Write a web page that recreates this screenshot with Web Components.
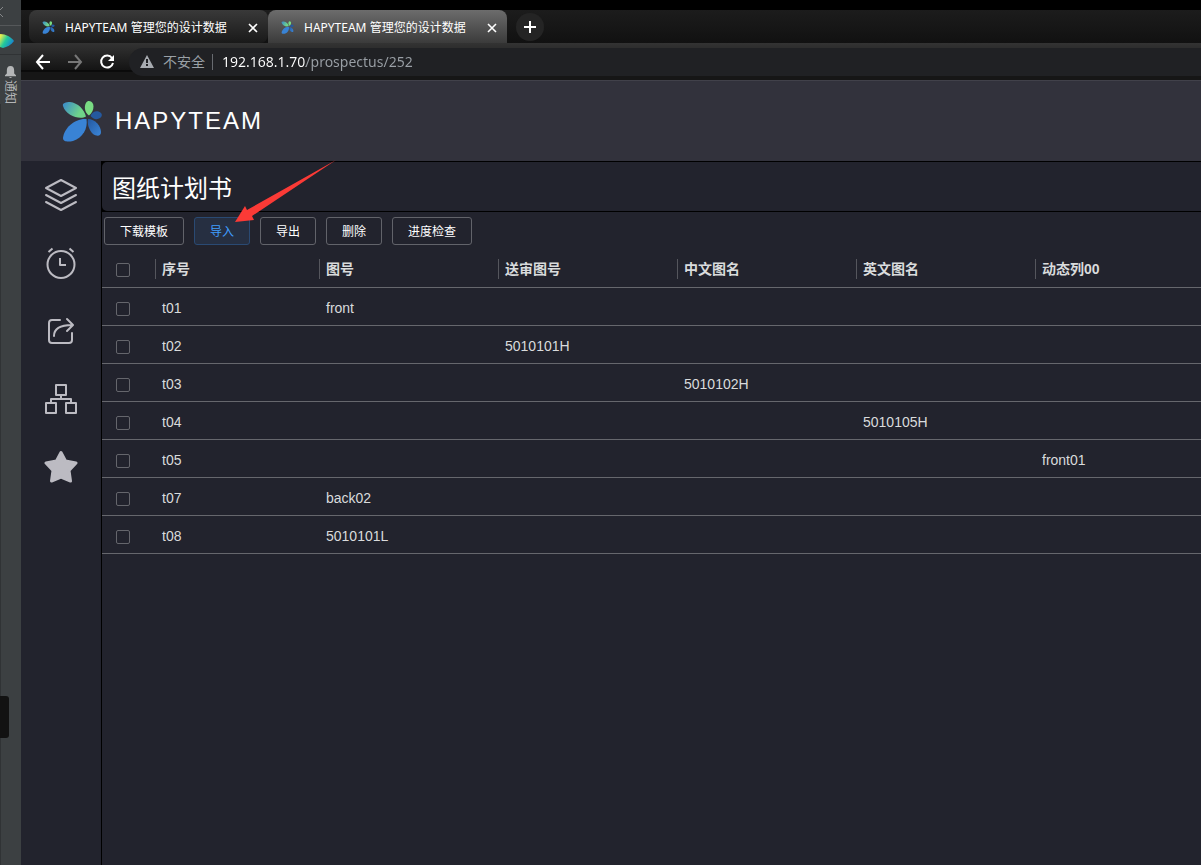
<!DOCTYPE html>
<html lang="zh-CN">
<head>
<meta charset="utf-8">
<title>HAPYTEAM 管理您的设计数据</title>
<style>
html,body{margin:0;height:100%}
body{background:#22232d;color:#d9dbdc;font-family:"Liberation Sans","Noto Sans CJK SC",sans-serif;font-size:14px;overflow:hidden}
</style>
</head>
<body>
<hapy-desktop></hapy-desktop>
<script>
const define = (name, html, setup) => {
  const t = document.createElement('template');
  t.innerHTML = html;
  customElements.define(name, class extends HTMLElement {
    constructor() {
      super();
      this.attachShadow({mode: 'open'}).append(t.content.cloneNode(true));
    }
    connectedCallback() { if (setup) setup(this, this.shadowRoot); }
  });
};

define('hapy-logo', `
<style>:host{display:block;flex:none;width:40px;height:42px}svg{display:block;width:100%;height:100%}</style>
<svg viewBox="0 0 40 42" aria-hidden="true">
  <defs>
    <linearGradient id="a" x1="0" y1="0.3" x2="1" y2="0.7"><stop offset="0" stop-color="#3f91c5"/><stop offset=".75" stop-color="#6fd48a"/></linearGradient>
    <linearGradient id="b" x1="0" y1="0" x2="1" y2="1"><stop offset="0" stop-color="#2458a0"/><stop offset="1" stop-color="#3b86d8"/></linearGradient>
  </defs>
  <path fill="url(#a)" d="M24 16.500C18 20 4 16 1 6C0 3 4 2 8 2C16 3 22 9 24 16.500Z"/>
  <path fill="#79db83" d="M27 15.500C21 12 22 1 27 1C33 1 33 11 27 15.500Z"/>
  <path fill="#25599f" d="M28.500 16C30 11 36 10 39 13C41 15 39 18 37 18.500C34 20 31 19 28.500 16Z"/>
  <path fill="url(#b)" d="M26 19C33 19 39 26 39 32C39 37 34 36 31 34C27 30 25 24 26 19Z"/>
  <path fill="#3983d5" d="M24.500 19C26 28 21 38 11 41C6 42 1 42 1 38C2 28 13 18 24.500 19Z"/>
</svg>`);

define('ide-strip', `
<style>
:host{display:flex;flex-direction:column;align-items:center;width:21px;flex:none;background:#3c4042;box-sizing:border-box;position:relative;overflow:hidden}
.back{height:26px;width:21px;border-bottom:1px solid #55585a;box-sizing:border-box}
.run{height:28px;width:21px;border-bottom:1px solid #303335}
svg{display:block}
.bell{margin-top:11px}
.notice{writing-mode:vertical-rl;text-orientation:sideways;font:12px/14px "Noto Sans CJK SC",sans-serif;color:#b4b6b7;margin-top:2px}
.edge{flex:1;width:20px;border-left:1px solid #303335;align-self:flex-start}
.handle{position:absolute;left:0;bottom:127px;width:9px;height:42px;background:#121212;border-radius:0 3px 3px 0}
</style>
<div class="back"><svg width="21" height="25" fill="none" stroke="#85888a"><path d="M3 7L-2 12L3 17"/></svg></div>
<div class="run"><svg width="21" height="28"><defs><linearGradient id="g" x1="0" y1="0" x2="1" y2=".6"><stop offset=".1" stop-color="#e5ee50"/><stop offset=".5" stop-color="#22c99b"/><stop offset="1" stop-color="#187ed5"/></linearGradient></defs><path fill="url(#g)" d="M0 8C6 8 11 11 14 15C11 19 7 21 3 22L0 21Z"/></svg></div>
<svg class="bell" width="11" height="12" viewBox="0 0 12 13" fill="#b4b6b7"><path d="M6 0C3 0 2 2 2 5V8L0 10V11H12V10L10 8V5C10 2 9 0 6 0ZM4 12H8L6 13Z"/></svg>
<div class="notice">通知</div><div class="edge"></div><div class="handle"></div>`);

define('browser-tab', `
<style>
:host{display:flex;align-items:center;box-sizing:border-box;width:239px;height:33px;padding:2px 10px 0 13px;border-radius:8px;background:linear-gradient(#393939,#191919);color:#fff;font:12px/16px "Noto Sans","Noto Sans CJK SC",sans-serif}
:host([active]){border-radius:8px 8px 0 0;background:linear-gradient(#6c6c6c,#3b3b3b)}
hapy-logo{width:13px;height:13px;margin-right:10px}
span{flex:1;white-space:nowrap}
button{appearance:none;border:0;background:none;padding:0;width:10px;height:10px}
svg{display:block}
</style>
<hapy-logo></hapy-logo><span><slot></slot></span>
<button aria-label="关闭标签页"><svg width="10" height="10" stroke="#fff" stroke-width="1.600"><path d="M1 1L9 9M9 1L1 9"/></svg></button>`);

define('browser-chrome', `
<style>
:host{display:block;background:#000}
.tabs{display:flex;align-items:center;height:33px;margin-top:10px;padding-left:8px;background:linear-gradient(#1c1c1c,#111)}
.new{width:28px;height:28px;margin-left:9px;border:0;border-radius:14px;background:#242424;padding:8px}
svg{display:block}
.bar{display:flex;align-items:center;box-sizing:border-box;height:37px;padding-left:14px;background:linear-gradient(#333,#141414 27px,#000 28px,#161616 29px)}
.nav{appearance:none;border:0;background:none;padding:0;width:16px;height:16px;margin-right:16px}
.nav:nth-child(3){margin-right:14px}
.address{flex:1;display:flex;align-items:center;height:28px;border-radius:14px 0 0 14px;background:#202124;padding-left:11px;font:14px/20px "Noto Sans","Noto Sans CJK SC",sans-serif;color:#9aa0a6}
.safe{margin-left:9px;padding-right:7px;border-right:1px solid #686b70;line-height:16px;white-space:nowrap}
input{flex:1;min-width:0;appearance:none;border:0;padding:0 0 0 9px;font:inherit;outline:0;color:transparent;-webkit-text-fill-color:transparent;background:linear-gradient(90deg,#fff 93px,#9aa0a6 93px);-webkit-background-clip:text;background-clip:text}
</style>
<div class="tabs"><browser-tab>HAPYTEAM 管理您的设计数据</browser-tab><browser-tab active>HAPYTEAM 管理您的设计数据</browser-tab>
<button class="new" aria-label="新标签页"><svg width="12" height="12" stroke="#fff" stroke-width="2"><path d="M6 0V12M0 6H12"/></svg></button></div>
<div class="bar">
<button class="nav" aria-label="后退"><svg width="16" height="16" fill="none" stroke="#fff" stroke-width="2"><path d="M8 1L2 8L8 15M2 8H15"/></svg></button>
<button class="nav" aria-label="前进"><svg width="16" height="16" fill="none" stroke="#777" stroke-width="2"><path d="M8 1L14 8L8 15M14 8H1"/></svg></button>
<button class="nav" aria-label="刷新"><svg width="16" height="16" fill="none" stroke="#fff" stroke-width="2"><path d="M13 4A6 6 0 1 0 14 9"/><path fill="#fff" stroke="none" d="M15 1V7H9Z"/></svg></button>
<div class="address"><svg width="14" height="13"><path fill="#a7abb0" d="M7 0L14 13H0Z"/><path stroke="#202124" stroke-width="2" d="M7 4V8M7 9V11"/></svg>
<span class="safe">不安全</span><input aria-label="地址" value="192.168.1.70/prospectus/252" readonly></div></div>`);

define('app-header', `
<style>
:host{display:flex;align-items:center;box-sizing:border-box;height:81px;padding:0 41px;background:#32323c;border-top:1px solid #41414a;color:#fff}
h1{margin:0 0 0 13px;font-size:24px;line-height:32px;font-weight:400;letter-spacing:2px}
</style>
<hapy-logo></hapy-logo><h1>HAPYTEAM</h1>`);

define('side-nav', `
<style>
:host{display:block;box-sizing:border-box;width:81px;flex:none;border-right:1px solid #000}
nav{display:flex;flex-direction:column}
a{display:flex;height:68px;align-items:center;justify-content:center}
svg{display:block;fill:none;stroke:#bcbbc2;stroke-width:2;stroke-linejoin:round;stroke-linecap:round}
</style>
<nav>
<a href="#layers" aria-label="图层"><svg width="34" height="34"><path d="M17 2L32 10L17 18L2 10ZM2 17L17 25L32 17M2 24L17 32L32 24"/></svg></a>
<a href="#clock" aria-label="时间"><svg width="34" height="34"><circle cx="17" cy="18.500" r="13.500"/><path d="M16 12V19H22M4.500 6L8.500 2.500M29.500 6L25.500 2.500" stroke-linecap="butt"/></svg></a>
<a href="#share" aria-label="分享"><svg width="34" height="34"><path d="M16 6H8Q5 6 5 9V26Q5 29 8 29H25Q28 29 28 26V19M10 22C10 15 15 11 28 11M23 5L29 11L23 17"/></svg></a>
<a href="#structure" aria-label="结构"><svg width="34" height="34" stroke-linejoin="miter"><path d="M12 3H22V13H12ZM2 21H12V31H2ZM22 21H32V31H22ZM17 13V17M7 21V17H27V21"/></svg></a>
<a href="#star" aria-label="收藏"><svg width="34" height="34"><path fill="#bcbbc2" stroke-width="3" d="M17 2.500L21.500 11L32 13L25 20.500L26.500 31L17 27L7.500 31L9 20.500L2 13L12.500 11Z"/></svg></a>
</nav>`);

define('tool-button', `
<style>
:host{display:block}
button{appearance:none;box-sizing:border-box;height:28px;padding:2px 15px 0;border:1px solid #62636a;border-radius:3px;background:transparent;color:#fff;font:12px/16px "Liberation Sans","Noto Sans CJK SC",sans-serif;display:block;white-space:nowrap}
:host([primary]) button{color:#409eff;background:#262f41;border-color:#2a4a73}
</style><button><slot></slot></button>`);

define('plan-table', `
<style>
:host{display:block}
table{width:100%;border-collapse:separate;border-spacing:0;table-layout:fixed}
col.c{width:53px}col.n{width:164px}col.w{width:179px}
th,td{box-sizing:border-box;height:38px;padding:0;border-bottom:1px solid #66676d;text-align:left;font-size:14px;line-height:20px;white-space:nowrap}
th{font-weight:700}
th div{border-left:1px solid #55565d;padding-left:6px}
td{padding:2px 0 0 7px}
th:first-child{padding:2px 0 0 14px}
td:first-child{padding:4px 0 0 14px}
input{appearance:none;display:block;box-sizing:border-box;margin:0;width:14px;height:14px;border:1px solid #65666c;border-radius:2px}
</style>
<table><colgroup><col class="c"><col class="n"><col class="w"><col class="w"><col class="w"><col class="w"><col></colgroup><thead></thead><tbody></tbody></table>`,
(el, root) => {
  const heads = ['序号','图号','送审图号','中文图名','英文图名','动态列00'];
  const rows = [['t01',1,'front'],['t02',2,'5010101H'],['t03',3,'5010102H'],['t04',4,'5010105H'],['t05',5,'front01'],['t07',1,'back02'],['t08',1,'5010101L']];
  root.querySelector('thead').innerHTML = '<tr><th><input type="checkbox" aria-label="全选"></th>' + heads.map(h => `<th scope="col"><div>${h}</div></th>`).join('') + '</tr>';
  root.querySelector('tbody').innerHTML = rows.map(([id, at, value]) =>
    `<tr><td><input type="checkbox" aria-label="${id}"></td>` + heads.map((_, i) => `<td>${i === 0 ? id : i === at ? value : ''}</td>`).join('') + '</tr>').join('');
});

define('plan-page', `
<style>
:host{display:block;flex:1;min-width:0;position:relative}
.title{background:#000;padding:1px 0}
h2{box-sizing:border-box;margin:0;padding:5px 10px 0;background:#22232d;border-radius:5px 0 0 5px;font-size:24px;line-height:44px;height:49px;font-weight:400;color:#fff}
.tools{display:flex;gap:10px;padding:5px 2px}
.pointer{position:absolute;left:132px;top:-2px;display:block;pointer-events:none}
</style>
<div class="title"><h2>图纸计划书</h2></div>
<div class="tools"><tool-button>下载模板</tool-button><tool-button primary>导入</tool-button><tool-button>导出</tool-button><tool-button>删除</tool-button><tool-button>进度检查</tool-button></div>
<plan-table></plan-table>
<svg class="pointer" width="104" height="64" aria-hidden="true"><path fill="#fb3a36" d="M1 63L11 47L13 51L102 1L18 57L20 61Z"/></svg>`);

define('hapy-desktop', `
<style>
:host{display:flex;height:100%}
.window{flex:1;min-width:0;display:flex;flex-direction:column}
main{flex:1;display:flex}
</style>
<ide-strip></ide-strip>
<div class="window"><browser-chrome></browser-chrome><app-header></app-header><main><side-nav></side-nav><plan-page></plan-page></main></div>`);
</script>
</body>
</html>
